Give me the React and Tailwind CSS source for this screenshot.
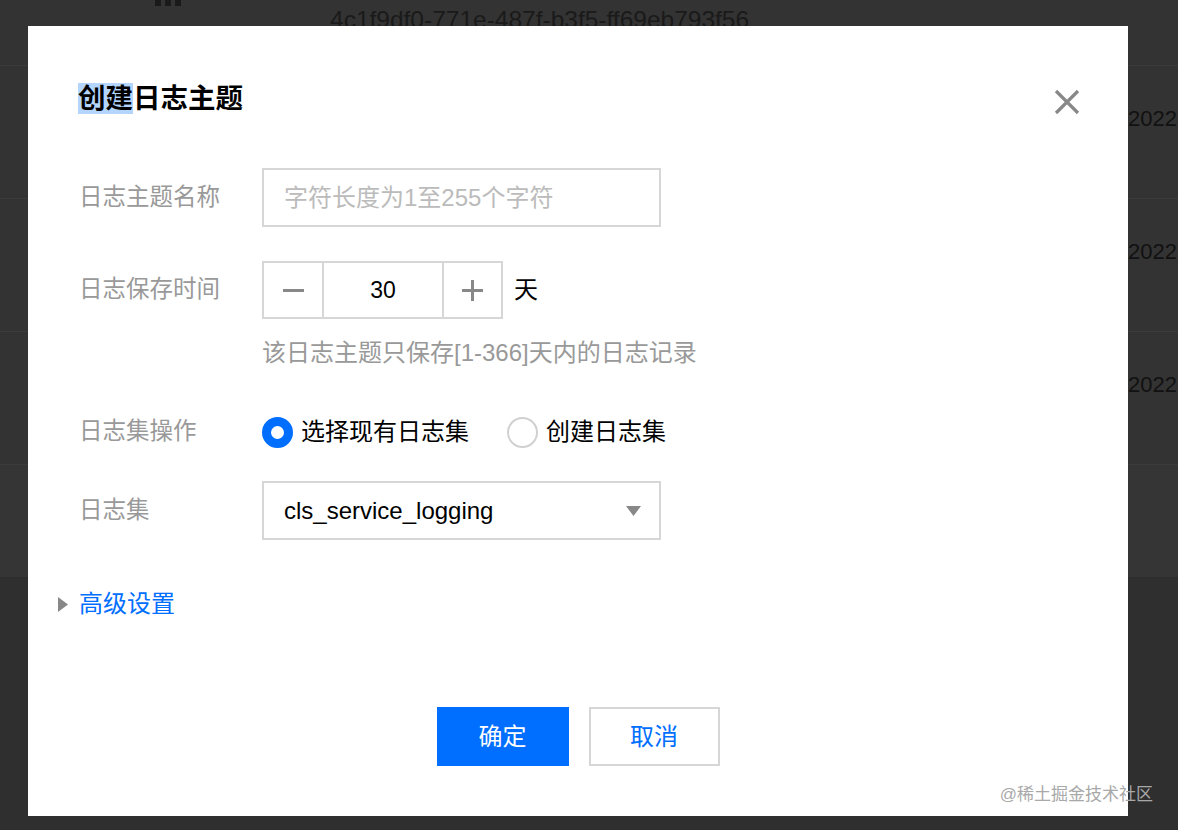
import { useState } from "react";

function Row() {
  return (
    <div className="flex h-[133px] justify-end border-b border-[#3b3b3b] bg-[#333333]">
      <div className="w-[50px] whitespace-nowrap pt-[36px] text-[22px] text-[#111111]">2022</div>
    </div>
  );
}

function Modal() {
  const [days, setDays] = useState(30);
  const [mode, setMode] = useState("existing");

  return (
    <div className="absolute left-[28px] top-[26px] flex h-[790px] w-[1100px] flex-col bg-white">
      <div className="flex items-center justify-between pl-[50px] pr-[48px] pt-[53px]">
        <div className="text-[27.5px] font-semibold leading-[40px] text-black">
          <span className="bg-[#b4d5fe]">创建</span>日志主题
        </div>
        <button type="button" className="mt-[6px] text-[#888888]">
          <svg width="26" height="26" viewBox="0 0 26 26" fill="none">
            <path d="M2 2L24 24M24 2L2 24" stroke="currentColor" strokeWidth="3.2" />
          </svg>
        </button>
      </div>

      <div className="mt-[49px] flex flex-col pl-[51px] text-[24px]">
        <div className="flex items-center">
          <div className="w-[183px] text-[23.5px] text-[#999999]">日志主题名称</div>
          <div className="flex h-[59px] w-[399px] items-center border-2 border-[#d6d6d6] px-[20px] text-[#bbbbbb]">
            字符长度为1至255个字符
          </div>
        </div>

        <div className="mt-[34px] flex items-center">
          <div className="w-[183px] text-[23.5px] text-[#999999]">日志保存时间</div>
          <div className="flex h-[58px] border-2 border-[#d6d6d6]">
            <button
              type="button"
              onClick={() => setDays(Math.max(1, days - 1))}
              className="flex w-[60px] items-center justify-center border-r-2 border-[#d6d6d6]"
            >
              <span className="h-[3px] w-[21px] bg-[#888888]" />
            </button>
            <div className="flex w-[118px] items-center justify-center text-[23px] text-black">{days}</div>
            <button
              type="button"
              onClick={() => setDays(Math.min(366, days + 1))}
              className="flex w-[59px] items-center justify-center border-l-2 border-[#d6d6d6]"
            >
              <svg width="21" height="21" viewBox="0 0 21 21">
                <path d="M0 10.5H21M10.5 0V21" stroke="#888888" strokeWidth="3" />
              </svg>
            </button>
          </div>
          <div className="ml-[11px] text-black">天</div>
        </div>

        <div className="mt-[19px] pl-[183px] leading-[30px] text-[#999999]">
          该日志主题只保存[1-366]天内的日志记录
        </div>

        <div className="mt-[48px] flex h-[32px] items-center">
          <div className="w-[183px] text-[23.5px] text-[#999999]">日志集操作</div>
          <button type="button" onClick={() => setMode("existing")} className="flex items-center">
            <span
              className={`h-[31px] w-[31px] rounded-full ${
                mode === "existing" ? "border-[9px] border-[#006eff]" : "border-2 border-[#d0d0d0]"
              }`}
            />
            <span className="ml-[8px] text-black">选择现有日志集</span>
          </button>
          <button type="button" onClick={() => setMode("new")} className="ml-[38px] flex items-center">
            <span
              className={`h-[31px] w-[31px] rounded-full ${
                mode === "new" ? "border-[9px] border-[#006eff]" : "border-2 border-[#d0d0d0]"
              }`}
            />
            <span className="ml-[8px] text-black">创建日志集</span>
          </button>
        </div>

        <div className="mt-[33px] flex items-center">
          <div className="w-[183px] text-[23.5px] text-[#999999]">日志集</div>
          <div className="flex h-[59px] w-[399px] items-center justify-between border-2 border-[#d6d6d6] pl-[20px] pr-[18px] text-black">
            <span>cls_service_logging</span>
            <svg width="15" height="10" viewBox="0 0 15 10">
              <path d="M0 0H15L7.5 10Z" fill="#888888" />
            </svg>
          </div>
        </div>
      </div>

      <div className="mt-[49px] flex items-center pl-[30px]">
        <svg width="10" height="15" viewBox="0 0 10 15">
          <path d="M0 0L10 7.5L0 15Z" fill="#888888" />
        </svg>
        <span className="ml-[11px] text-[24px] leading-[30px] text-[#006eff]">高级设置</span>
      </div>

      <div className="mt-[88px] flex justify-center gap-[20px] text-[24px]">
        <button type="button" className="h-[59px] w-[132px] bg-[#006eff] text-white">
          确定
        </button>
        <button type="button" className="h-[59px] w-[131px] border-2 border-[#d6d6d6] text-[#006eff]">
          取消
        </button>
      </div>
    </div>
  );
}

export default function App() {
  return (
    <div className="relative h-[830px] w-[1178px] overflow-hidden bg-[#2f2f30] font-[family-name:'Liberation_Sans','Noto_Sans_CJK_SC',sans-serif]">
      <div className="flex flex-col">
        <div className="flex h-[66px] items-start border-b border-[#3b3b3b] bg-[#333333]">
          <div className="ml-[155px] flex gap-[4px]">
            <span className="h-[6px] w-[6px] bg-[#1a1a1a]" />
            <span className="h-[6px] w-[6px] bg-[#1a1a1a]" />
            <span className="h-[6px] w-[6px] bg-[#1a1a1a]" />
          </div>
          <div className="ml-[149px] mt-[2px] text-[24.5px] text-[#1a1a1a]">
            4c1f9df0-771e-487f-b3f5-ff69eb793f56
          </div>
        </div>
        <Row />
        <Row />
        <Row />
        <div className="h-[113px] border-b border-[#2c2c2c] bg-[#353535]" />
      </div>

      <Modal />

      <div className="absolute right-[25px] top-[782px] text-[17px] text-[#a8a8a8]">@稀土掘金技术社区</div>
    </div>
  );
}
